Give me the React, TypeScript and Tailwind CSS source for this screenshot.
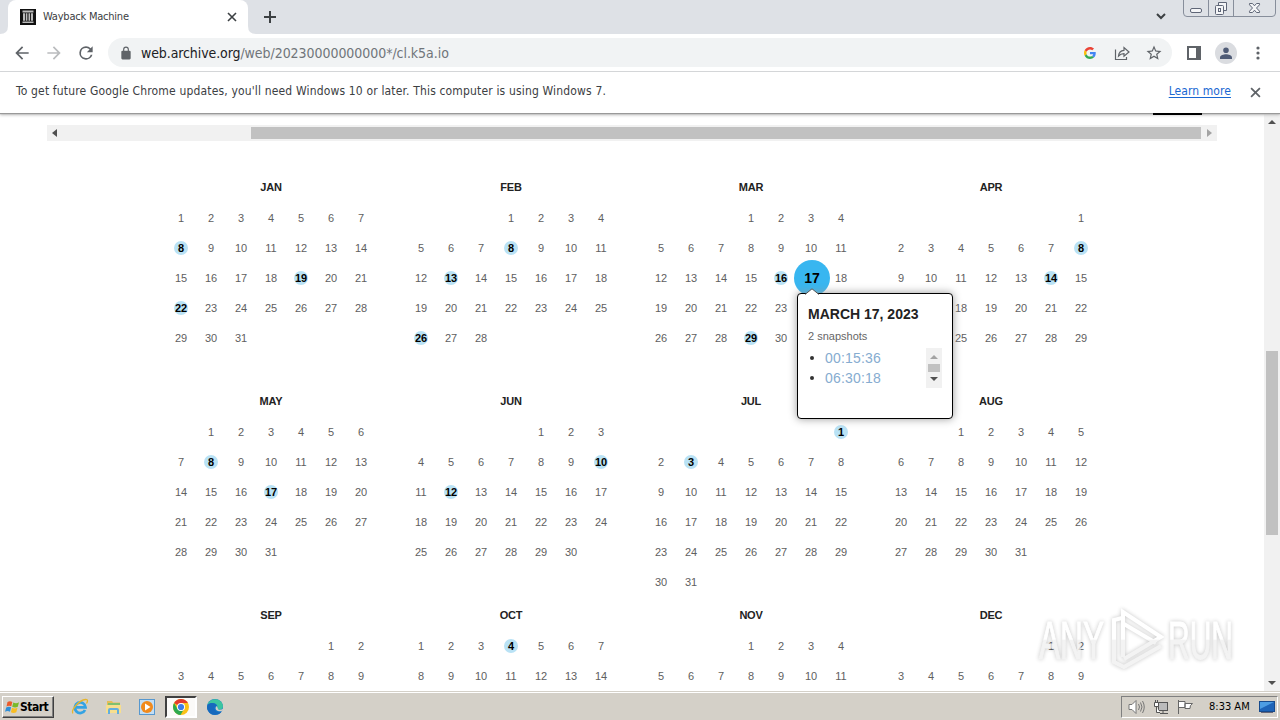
import type { ReactNode } from "react";
import clsx from "clsx";

type Month = {
  name: string
  offset: number
  days: number
  captures: number[]
  selected?: number
}

// the last row of months only goes down to the fold
const months: Month[] = [
  {name: 'JAN', offset: 0, days: 31, captures: [8, 19, 22]},
  {name: 'FEB', offset: 3, days: 28, captures: [8, 13, 26]},
  {name: 'MAR', offset: 3, days: 31, captures: [16, 29], selected: 17},
  {name: 'APR', offset: 6, days: 30, captures: [8, 14]},
  {name: 'MAY', offset: 1, days: 31, captures: [8, 17]},
  {name: 'JUN', offset: 4, days: 30, captures: [10, 12]},
  {name: 'JUL', offset: 6, days: 31, captures: [1, 3]},
  {name: 'AUG', offset: 2, days: 31, captures: []},
  {name: 'SEP', offset: 5, days: 9, captures: []},
  {name: 'OCT', offset: 0, days: 14, captures: [4]},
  {name: 'NOV', offset: 3, days: 11, captures: []},
  {name: 'DEC', offset: 5, days: 9, captures: []},
]

const snapshots = ['00:15:36', '06:30:18']

function Arrow({dir, className}: { dir: 'up' | 'down' | 'left' | 'right', className?: string }) {
  const points = {
    up: '0,4 4,0 8,4',
    down: '0,0 8,0 4,4',
    left: '5,0 5,8 0,4',
    right: '0,0 5,4 0,8',
  }[dir]
  const vertical = dir === 'up' || dir === 'down'
  return (
    <svg width={vertical ? 8 : 5} height={vertical ? 4 : 8} className={clsx('shrink-0', className)} fill="currentColor">
      <polygon points={points}/>
    </svg>
  )
}

function Cross({size, className}: { size: number, className?: string }) {
  return (
    <svg width={size} height={size} viewBox="0 0 10 10" className={className} stroke="currentColor" strokeWidth="1.600">
      <path d="M1 1l8 8M9 1l-8 8"/>
    </svg>
  )
}

function MaterialIcon({d, size = 20, className}: { d: string, size?: number, className?: string }) {
  return (
    <svg width={size} height={size} viewBox="0 0 24 24" fill="currentColor" className={className}>
      <path d={d}/>
    </svg>
  )
}

function TabStrip() {
  return (
    <div className="flex h-[34px] bg-[#dee1e6] pl-2">
      <div className="relative flex h-full w-60 items-center rounded-t-lg bg-white pl-3 pr-[11px]">
        <svg width="16" height="16" viewBox="0 0 16 16" className="shrink-0">
          <rect width="16" height="16" fill="#111"/>
          <path d="M2.500 1.500h11v2h-11zM3 4.300h2v7.500H3zM5.800 4.300h1.600v7.500H5.800zM8.500 4.300h1.600v7.500H8.500zM11 4.300h2v7.500h-2zM2.500 12.600h11V14h-11z" fill="#bbb"/>
        </svg>
        <span className="ml-[7px] grow whitespace-nowrap text-[11px] tracking-[-0.22px] text-[#3c4043]">Wayback Machine</span>
        <Cross size={10} className="text-[#3c4043]"/>
        <svg width="256" height="8" className="absolute -left-2 bottom-0" fill="#fff">
          <path d="M0 8Q8 8 8 0V8zM256 8Q248 8 248 0V8z"/>
        </svg>
      </div>
      <svg width="12" height="12" className="ml-4 mt-[11px]" stroke="#3c4043" strokeWidth="2">
        <path d="M6 0v12M0 6h12"/>
      </svg>
      <svg width="10" height="7" className="ml-auto mr-[17px] mt-[13px]" fill="none" stroke="#3c4043" strokeWidth="2">
        <path d="M1 1l4 4 4-4"/>
      </svg>
      <svg width="93" height="17" className="mr-1" fill="none" stroke="#5f6677">
        <path d="M.5 0v13q0 3.500 3.500 3.500h85q3.500 0 3.500-3.500V0M25.500 0v16M50.500 0v16" stroke="#878e9b"/>
        <rect x="7.500" y="8.500" width="11" height="4" rx="1.500" fill="#f4f5f7"/>
        <path d="M35.500 5V2.500h8v8H41" fill="#f4f5f7"/>
        <rect x="32.500" y="5.500" width="8" height="9" rx="1" fill="#f4f5f7"/>
        <rect x="35.500" y="8.500" width="2" height="3"/>
        <path d="M66.500 3.500h3l2 2.300 2-2.300h3v1.300l-3 3.200 3 3.200v1.300h-3l-2-2.300-2 2.300h-3v-1.300l3-3.200-3-3.200z" fill="#f4f5f7"/>
      </svg>
    </div>
  )
}

function Toolbar() {
  return (
    <div className="flex h-[38px] items-center border-b border-[#d5d7da] bg-white pl-3 text-[#5f6368]">
      <MaterialIcon d="M20 11H7.830l5.590-5.590L12 4l-8 8 8 8 1.410-1.410L7.830 13H20v-2z"/>
      <MaterialIcon className="ml-3 text-[#babcbe]" d="M12 4l-1.410 1.410L16.170 11H4v2h12.170l-5.580 5.590L12 20l8-8z"/>
      <MaterialIcon className="ml-3" d="M17.650 6.350A7.960 7.960 0 0 0 12 4a8 8 0 1 0 7.730 10h-2.080A6 6 0 1 1 12 6c1.660 0 3.140.69 4.220 1.780L13 11h7V4l-2.350 2.350z"/>
      <div className="ml-3 flex h-[29px] w-[1064px] items-center rounded-full bg-[#f1f3f4] pl-[11px] pr-[9px]">
        <MaterialIcon size={14} d="M18 8h-1V6A5 5 0 0 0 7 6v2H6a2 2 0 0 0-2 2v11a2 2 0 0 0 2 2h12a2 2 0 0 0 2-2V10a2 2 0 0 0-2-2zM9 6a3 3 0 0 1 6 0v2H9z"/>
        <span className="ml-2 grow whitespace-nowrap text-sm tracking-[-0.05px] text-[#70757a]">
          <span className="tracking-[-0.1px] text-[#202124]">web.archive.org</span>/web/20230000000000*/cl.k5a.io
        </span>
        <svg width="12" height="12" viewBox="0 0 48 48">
          <path fill="#ea4335" d="M24 9.500c3.540 0 6.710 1.220 9.210 3.600l6.850-6.850C35.900 2.380 30.470 0 24 0 14.620 0 6.510 5.380 2.560 13.220l7.980 6.190C12.430 13.720 17.740 9.500 24 9.500z"/>
          <path fill="#4285f4" d="M46.980 24.550c0-1.570-.15-3.090-.38-4.550H24v9.020h12.940c-.58 2.960-2.260 5.480-4.780 7.180l7.730 6c4.510-4.180 7.090-10.360 7.090-17.650z"/>
          <path fill="#fbbc05" d="M10.530 28.590A14.500 14.500 0 0 1 9.770 24c0-1.600.27-3.140.76-4.590l-7.980-6.190A24 24 0 0 0 0 24c0 3.880.92 7.540 2.560 10.780l7.970-6.190z"/>
          <path fill="#34a853" d="M24 48c6.480 0 11.930-2.130 15.890-5.810l-7.730-6c-2.150 1.450-4.920 2.300-8.160 2.300-6.260 0-11.570-4.220-13.470-9.910l-7.980 6.190C6.510 42.620 14.620 48 24 48z"/>
        </svg>
        <svg width="16" height="16" viewBox="0 0 16 16" className="ml-[18px]" fill="none" stroke="currentColor" strokeWidth="1.200">
          <path d="M1.500 4.500v10h11V12M4.500 11c.3-3.800 2.500-5.500 5.500-5.700V2.500L15 7l-5 4.300V8.700C7.500 8.700 6 9.300 4.500 11z"/>
        </svg>
        <MaterialIcon size={18} className="ml-[15px]" d="M22 9.240l-7.190-.62L12 2 9.190 8.630 2 9.240l5.460 4.730L5.820 21 12 17.270 18.180 21l-1.630-7.030L22 9.240zM12 15.400l-3.760 2.270 1-4.280-3.320-2.880 4.380-.38L12 6.100l1.710 4.040 4.380.38-3.320 2.880 1 4.280L12 15.400z"/>
      </div>
      <svg width="14" height="14" className="ml-[15px]" fill="none" stroke="currentColor" strokeWidth="2">
        <path d="M1 1h12v12H1z"/>
        <path d="M11 1v12" strokeWidth="4"/>
      </svg>
      <div className="ml-3.5 flex size-[22px] items-center justify-center rounded-full bg-[#dadce0] text-[#4f5b76]">
        <MaterialIcon size={16} d="M12 12a4.200 4.200 0 1 0 0-8.400A4.200 4.200 0 0 0 12 12zm0 2c-3.500 0-9 1.500-9 5v2h18v-2c0-3.500-5.500-5-9-5z"/>
      </div>
      <svg width="4" height="14" className="ml-[19px]" fill="currentColor">
        <circle cx="2" cy="2" r="1.600"/>
        <circle cx="2" cy="7" r="1.600"/>
        <circle cx="2" cy="12" r="1.600"/>
      </svg>
    </div>
  )
}

function InfoBar() {
  return (
    <div className="relative z-10 flex h-[41px] items-center bg-white pl-4 pr-[19px] text-xs text-[#3c4043] shadow-[0_1px_1px_#999,0_2px_3px_#bbb]">
      <span className="mb-[3px] grow whitespace-nowrap tracking-[0.16px]">
        To get future Google Chrome updates, you'll need Windows 10 or later. This computer is using Windows 7.
      </span>
      <span className="mb-[3px] mr-[19px] whitespace-nowrap tracking-[0.08px] text-[#1967d2] underline underline-offset-2">Learn more</span>
      <Cross size={11} className="text-[#5f6368]"/>
      <div className="absolute left-[1153px] top-[41px] h-0.5 w-[49px] bg-black"/>
    </div>
  )
}

function SnapshotPopup() {
  return (
    <div className="absolute left-px top-[30px] z-20 h-[126px] w-[156px] rounded border border-black bg-white px-2.5 text-left font-normal text-[#333] shadow-[0_0_8px_#999]">
      <svg width="14" height="7" className="absolute left-[7px] -top-[6px]" fill="#fff" stroke="#555">
        <path d="M0 6.500L7 .8l7 5.700"/>
      </svg>
      <h2 className="mt-[11px] whitespace-nowrap text-sm font-bold leading-[18px] text-[#222]">MARCH 17, 2023</h2>
      <p className="mt-[5px] text-[11px] leading-4 text-[#666]">2 snapshots</p>
      <div className="mt-1 flex h-10 justify-between">
        <ul className="text-sm leading-5 tracking-[0.2px] text-[#86acd0]">
          {snapshots.map((time) => (
            <li key={time} className="flex items-center">
              <span className="ml-0.5 mr-[7px] size-1 rounded-full bg-[#333]"/>
              <span className="ml-1">{time}</span>
            </li>
          ))}
        </ul>
        <div className="flex w-4 flex-col items-center bg-[#f1f1f1] pt-[7px] text-[#505050]">
          <Arrow dir="up" className="text-[#a3a3a3]"/>
          <div className="mt-[5px] h-2 w-3 bg-[#c1c1c1]"/>
          <Arrow dir="down" className="mt-[5px]"/>
        </div>
      </div>
    </div>
  )
}

function Day({day, month}: { day: number, month: Month }) {
  const captured = month.captures.includes(day)
  const selected = month.selected === day
  return (
    <div className="relative flex h-[30px] items-center justify-center">
      {captured && <span className="absolute left-2 top-2 size-3.5 rounded-full bg-[#b9e2f5]"/>}
      {selected && <span className="absolute -left-[2px] -top-[3px] size-9 rounded-full bg-[#38b6f0]"/>}
      <span className={clsx('relative', captured && 'font-bold text-black', selected && 'left-px text-sm font-bold text-black')}>
        {day}
      </span>
      {selected && <SnapshotPopup/>}
    </div>
  )
}

function Calendar() {
  return (
    <div className="ml-[166px] mt-[30px] grid w-[930px] grid-cols-4 gap-x-[30px] text-[11px] text-[#606060]">
      {months.map((month) => (
        <div key={month.name} className="h-[214px]">
          <h3 className="h-8 text-center font-bold leading-8 tracking-[-0.2px] text-[#222]">{month.name}</h3>
          <div className="grid grid-cols-7">
            {Array.from({length: month.offset}, (_, i) => <span key={`blank-${i}`}/>)}
            {Array.from({length: month.days}, (_, i) => <Day key={i} day={i + 1} month={month}/>)}
          </div>
        </div>
      ))}
    </div>
  )
}

function Watermark() {
  return (
    <svg width="220" height="80" className="absolute left-[1026px] top-[486px] z-20 opacity-75 drop-shadow-[0_0_2px_rgba(0,0,0,0.3)]" fontFamily="Liberation Sans" fontSize="53" fontWeight="400">
      <defs>
        <linearGradient id="fade" x1="0" y1="0" x2="0" y2="80" gradientUnits="userSpaceOnUse">
          <stop offset="0.5" stopColor="#fff"/>
          <stop offset="0.52" stopColor="#efefef"/>
        </linearGradient>
      </defs>
      <g fill="url(#fade)" stroke="url(#fade)">
        <text x="13" y="60" textLength="65" lengthAdjust="spacingAndGlyphs">ANY</text>
        <text x="142" y="60" textLength="65" lengthAdjust="spacingAndGlyphs">RUN</text>
        <g fill="none" strokeWidth="4">
          <path d="M96 19l-8 2v42l10 5 37-21"/>
          <path d="M97 58V13l38 25-37 22"/>
          <path d="M98 25l32 19"/>
        </g>
      </g>
    </svg>
  )
}

function Page() {
  return (
    <div className="relative flex h-[578px] overflow-hidden bg-white font-['Liberation_Sans',sans-serif]">
      <div className="w-[1264px] shrink-0">
        <div className="ml-[47px] mt-3 flex h-4 w-[1170px] items-center bg-[#f1f1f1] text-[#505050]">
          <Arrow dir="left" className="ml-[5px]"/>
          <div className="ml-[194px] h-3 w-[950px] bg-[#c1c1c1]"/>
          <Arrow dir="right" className="ml-1.5 text-[#a3a3a3]"/>
        </div>
        <Calendar/>
      </div>
      <div className="flex w-4 flex-col items-center bg-[#f1f1f1] text-[#505050]">
        <Arrow dir="up" className="mt-[7px]"/>
        <div className="mt-[227px] h-[184px] w-3 shrink-0 bg-[#c1c1c1]"/>
        <Arrow dir="down" className="mt-[146px]"/>
      </div>
      <Watermark/>
    </div>
  )
}

function TaskIcon({children}: { children: ReactNode }) {
  return <svg width="18" height="18" viewBox="0 0 18 18" className="shrink-0">{children}</svg>
}

function Taskbar() {
  return (
    <div className="flex h-[29px] items-center border-t border-[#d4d0c8] bg-[#d4d0c8] px-0.5 pt-0.5 text-black shadow-[inset_0_1px_0_#fff]">
      <div className="flex h-[22px] w-[52px] items-center border border-b-[#404040] border-l-white border-r-[#404040] border-t-white pl-0.5 shadow-[inset_-1px_-1px_0_#808080]">
        <svg width="15" height="14" viewBox="0 0 15 14" className="shrink-0">
          <path d="M2.500 2Q5 .3 7.300 2L6.300 6.300Q4 5 1.500 6.500z" fill="#ec5b2a"/>
          <path d="M8.300 2.400Q11 4 14 2.300L12.800 6.800Q10 8.200 7.200 6.700z" fill="#7ab929"/>
          <path d="M1.200 7.400Q4 6 6.100 7.300L5 11.700Q2.500 10.300 0 11.800z" fill="#2f8fd8"/>
          <path d="M7 7.800Q9.800 9.300 12.500 7.800L11.300 12.200Q8.500 13.800 5.900 12.200z" fill="#f9bd22"/>
        </svg>
        <span className="text-xs font-bold tracking-[-0.5px]">Start</span>
      </div>
      <div className="ml-[17px] flex items-center">
        <TaskIcon>
          <path d="M14 12A5.300 5.300 0 1 1 14.500 9.300H5" fill="none" stroke="#34a3e3" strokeWidth="2.800"/>
          <path d="M2 15.500C-1 13 8 2 14.500 1.500c3-.2 2 2.500 1 4" fill="none" stroke="#e6b52c" strokeWidth="1.300"/>
        </TaskIcon>
        <div className="w-4"/>
        <TaskIcon>
          <path d="M2 3h5l1 1.500h7V15H2z" fill="#e5bd57"/>
          <path d="M3 5h12v5H3z" fill="#7fc06f"/>
          <path d="M1 7h15v8H1z" fill="#f7de8e"/>
          <path d="M4 16v-4q0-1 1-1h7q1 0 1 1v4" fill="none" stroke="#62aede" strokeWidth="2"/>
        </TaskIcon>
        <div className="w-[15px]"/>
        <TaskIcon>
          <rect x="1.500" y="1.500" width="15" height="15" fill="#c3def4" stroke="#5798cf"/>
          <circle cx="9" cy="9" r="6" fill="#f18a1c"/>
          <path d="M7 5.500l5.500 3.500L7 12.500z" fill="#fff"/>
        </TaskIcon>
        <div className="ml-[9px] flex h-[22px] w-8 items-center justify-center border-2 border-b-white border-l-[#404040] border-r-white border-t-[#404040] bg-[#fbfaf8]">
          <TaskIcon>
            <circle cx="9" cy="9" r="8" fill="#fbc116"/>
            <path d="M9 9L2.100 5A8 8 0 0 1 15.900 5H9z" fill="#e33b2e"/>
            <path d="M2.100 5A8 8 0 0 0 8.500 17l3.500-6H5.500z" fill="#2da94f"/>
            <circle cx="9" cy="9" r="4" fill="#fff"/>
            <circle cx="9" cy="9" r="3.100" fill="#3e7de8"/>
          </TaskIcon>
        </div>
        <div className="w-[9px]"/>
        <TaskIcon>
          <circle cx="9" cy="9" r="8" fill="#1478c8"/>
          <path d="M1.500 7C3 0 14 -1 16.500 6c1.500 4-1 6-4 5.500-2-.5-1-1.500-1-3C11 5 5 3.500 1.500 7z" fill="#3cc5a0"/>
          <path d="M1.500 7C5 3.500 10 5 11 8c-3-1-4 4 0 6 2 .8 4 0 5-.8C13 18 3 19 1 10z" fill="#1769bd"/>
          <path d="M11 8c-2 1-2 4 1 5 2 .7 4 0 5-1v-1c-2 1-5 1-5 0z" fill="#d4d0c8"/>
        </TaskIcon>
      </div>
      <div className="ml-auto flex h-[22px] w-[157px] items-center border border-b-white border-l-[#808080] border-r-white border-t-[#808080] pl-1.5">
        <svg width="17" height="16" fill="#fff" stroke="#777">
          <path d="M1 5.500h3l4-4v13l-4-4H1z"/>
          <path d="M10.500 5q2 3 0 6M12.500 3.500q3 4.500 0 9M14.500 2q3.500 6 0 12" fill="none"/>
        </svg>
        <svg width="16" height="16" className="ml-2" fill="#fff" stroke="#555">
          <rect x="5.500" y="3.500" width="9" height="8" fill="#bbb"/>
          <path d="M7 14.500h8M10 12v2M1.500 3.500h4v4h-4zM2.500 1v2M4.500 1v2M3.500 8v5.500H7"/>
        </svg>
        <svg width="17" height="16" className="ml-2" fill="#fff" stroke="#666">
          <path d="M1.500 1v14M2 2.500h6v6H2M8 4.500h7.500q-3 2-2.500 5H8z"/>
        </svg>
        <span className="ml-[15px] whitespace-nowrap text-[11px] tracking-[0]">8:33 AM</span>
        <svg width="16" height="14" className="ml-auto mr-0.5">
          <rect x=".5" y="1.500" width="15" height="10" fill="#1e64b8" stroke="#174b8d"/>
          <path d="M1 2h14L1 9z" fill="#4d9de3"/>
          <path d="M2 12.500h12" stroke="#667"/>
        </svg>
      </div>
    </div>
  )
}

export default function App() {
  return (
    <div className="flex h-[720px] w-[1280px] flex-col overflow-hidden bg-white font-['DejaVu_Sans_Condensed','DejaVu_Sans',sans-serif]">
      <TabStrip/>
      <Toolbar/>
      <InfoBar/>
      <Page/>
      <Taskbar/>
    </div>
  )
}
